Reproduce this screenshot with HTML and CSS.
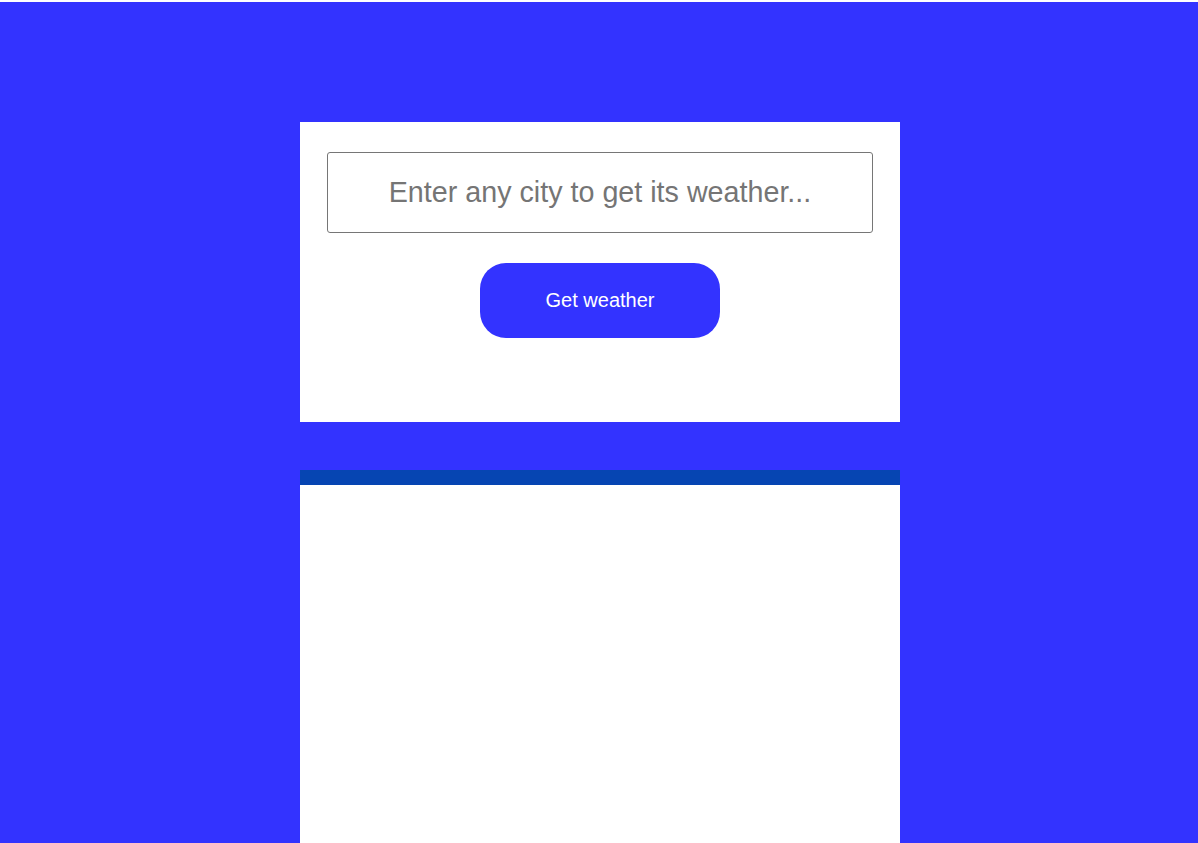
FILE: index.html
```html
<!DOCTYPE html>
<html lang="en">
<head>
<meta charset="utf-8">
<title>Weather</title>
<link rel="stylesheet" href="styles.css">
</head>
<body>
<div class="topline"></div>
<main class="page">
  <section class="card search">
    <input class="city" type="text" placeholder="Enter any city to get its weather...">
    <button class="go" type="button">Get weather</button>
  </section>
  <section class="card result">
    <div class="result-bar"></div>
  </section>
</main>
</body>
</html>
```
FILE: styles.css
```css
html, body {
  margin: 0;
  padding: 0;
  height: 100%;
}
body {
  background: #3333ff;
  font-family: "Liberation Sans", Arial, sans-serif;
  overflow: hidden;
}
.topline {
  height: 2px;
  background: #ffffff;
}
.page {
  display: flex;
  flex-direction: column;
  align-items: center;
  padding-top: 120px;
  padding-left: 2px;
  gap: 48px;
}
.card {
  width: 600px;
  background: #ffffff;
  box-sizing: border-box;
}
.search {
  height: 300px;
  padding-top: 30px;
  display: flex;
  flex-direction: column;
  align-items: center;
  gap: 30px;
}
.city {
  width: 546px;
  height: 81px;
  box-sizing: border-box;
  border: 1px solid #767676;
  border-radius: 3px;
  font-family: "Liberation Sans", Arial, sans-serif;
  font-size: 28.7px;
  text-align: center;
  color: #222;
  outline: none;
  padding: 0 10px;
}
.city::placeholder {
  color: #757575;
}
.go {
  width: 240px;
  height: 75px;
  border: none;
  border-radius: 26px;
  background: #3333ff;
  color: #ffffff;
  font-family: "Liberation Sans", Arial, sans-serif;
  font-size: 20px;
  cursor: pointer;
}
.result {
  height: 400px;
}
.result-bar {
  height: 15px;
  background: #0645b2;
}
```
